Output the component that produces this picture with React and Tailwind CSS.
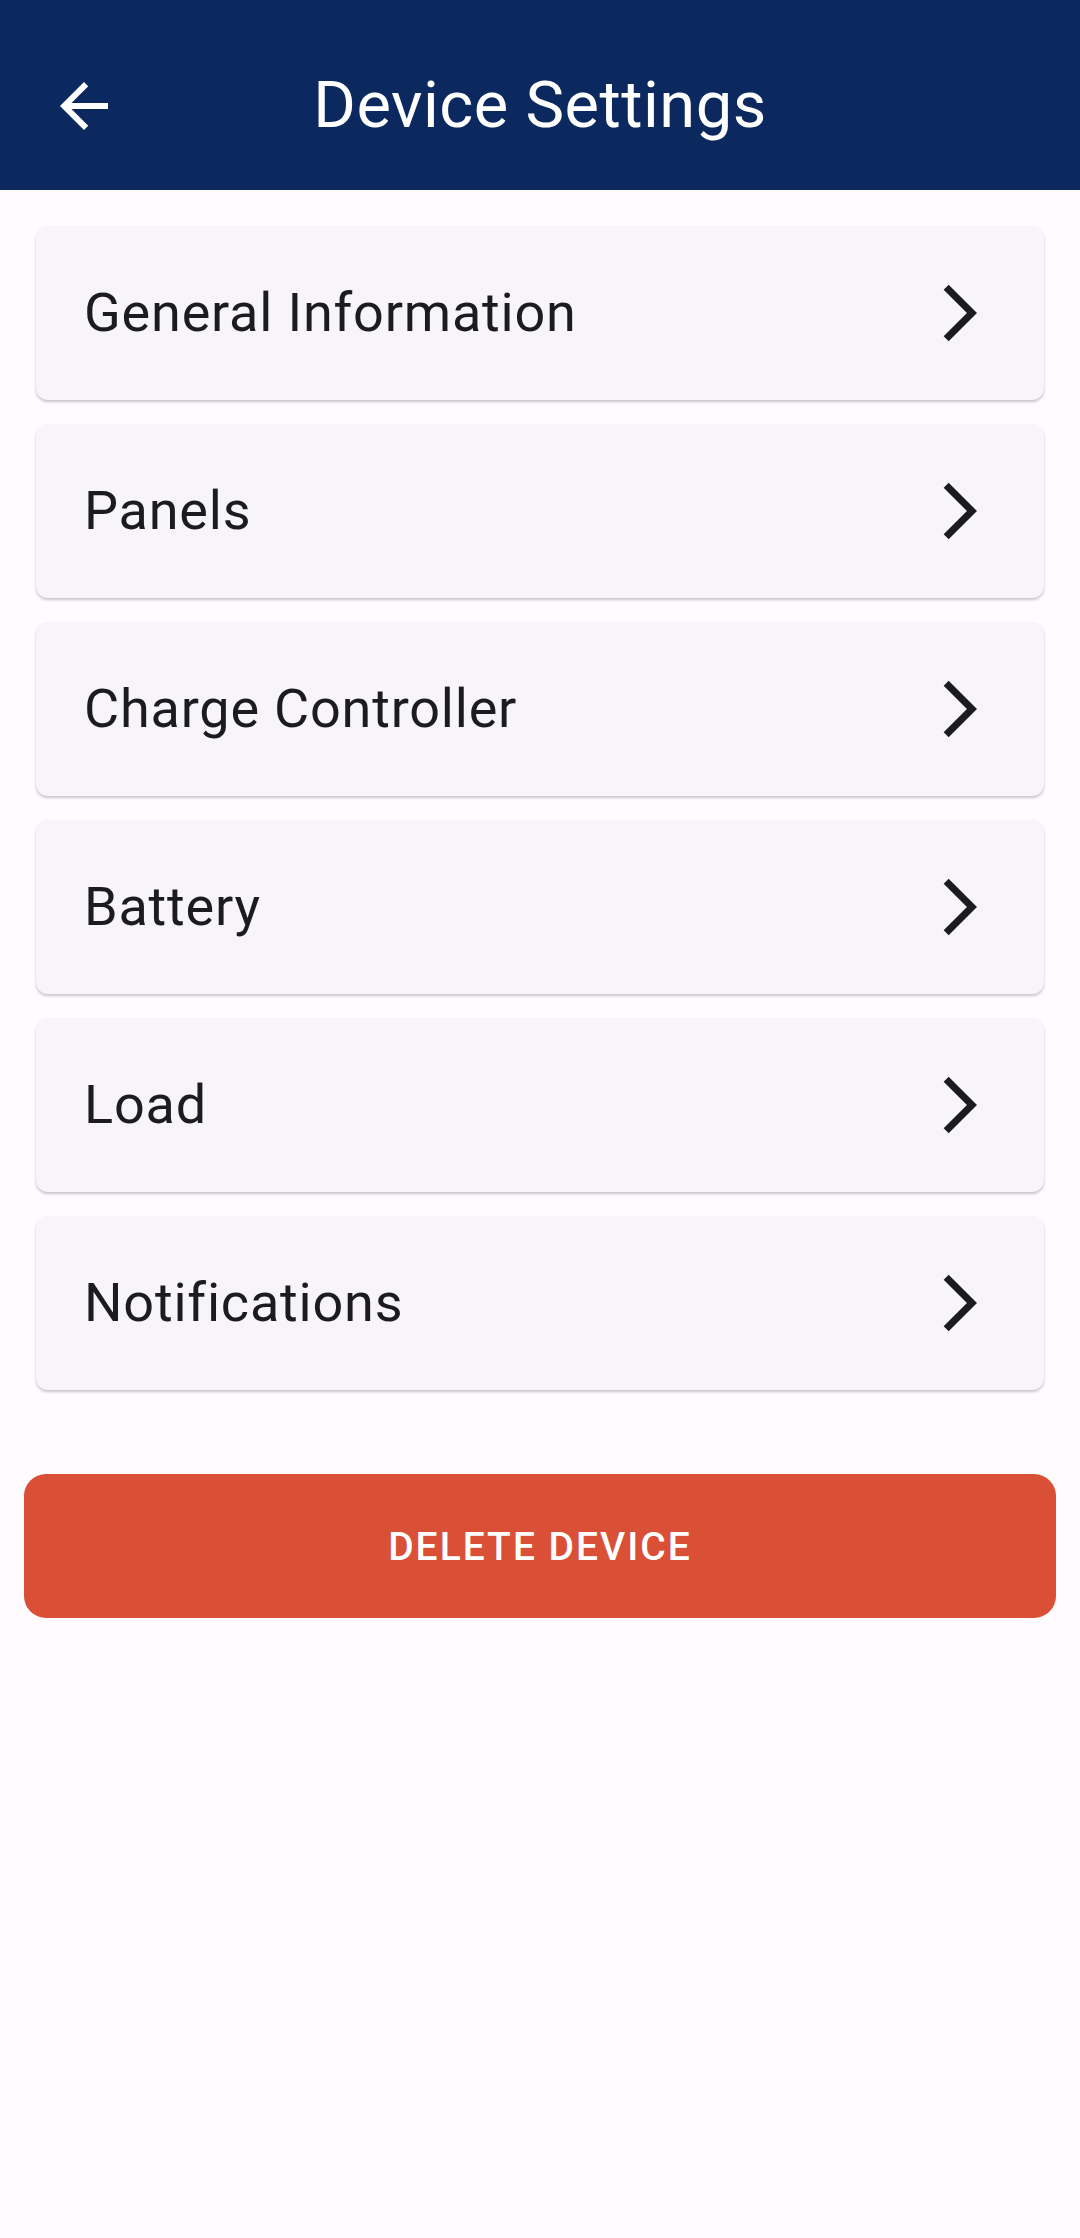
import React from "react";

const items = [
  "General Information",
  "Panels",
  "Charge Controller",
  "Battery",
  "Load",
  "Notifications",
];

function Chevron() {
  return (
    <svg width="68" height="68" viewBox="0 0 24 24" className="shrink-0">
      <path d="M6.23 20.23L8 22l10-10L8 2 6.23 3.77 14.46 12z" fill="#1c1b1f" />
    </svg>
  );
}

export default function App() {
  return (
    <div
      className="w-[1080px] h-[2238px] bg-[#fffbfe] flex flex-col"
      style={{ fontFamily: "Roboto, 'Noto Sans', sans-serif" }}
    >
      <header className="h-[190px] bg-[#0b295e] pt-[20px] relative flex items-center justify-center shrink-0">
        <svg
          width="72"
          height="72"
          viewBox="0 0 24 24"
          className="absolute left-[48px] top-[70px]"
        >
          <path
            d="M20 11H7.83l5.59-5.59L12 4l-8 8 8 8 1.41-1.41L7.83 13H20v-2z"
            fill="#ffffff"
          />
        </svg>
        <h1 className="text-white text-[65px] leading-none font-normal tracking-[0.5px]">Device Settings</h1>
      </header>

      <div className="flex flex-col gap-[24px] pt-[36px] px-[36px]">
        {items.map((t) => (
          <div
            key={t}
            className="h-[174px] rounded-[12px] bg-[#f7f5fa] shadow-[0_2px_3px_rgba(0,0,0,0.22)] flex items-center justify-between pl-[48px] pr-[50px]"
          >
            <span className="text-[54px] leading-none text-[#1c1b1f] tracking-[0.8px]">{t}</span>
            <Chevron />
          </div>
        ))}
      </div>

      <div className="px-[24px] pt-[84px]">
        <button className="w-full h-[144px] rounded-[22px] bg-[#d95036] text-white text-[39px] font-medium tracking-[2px] flex items-center justify-center pt-[2px]">
          DELETE DEVICE
        </button>
      </div>
    </div>
  );
}
